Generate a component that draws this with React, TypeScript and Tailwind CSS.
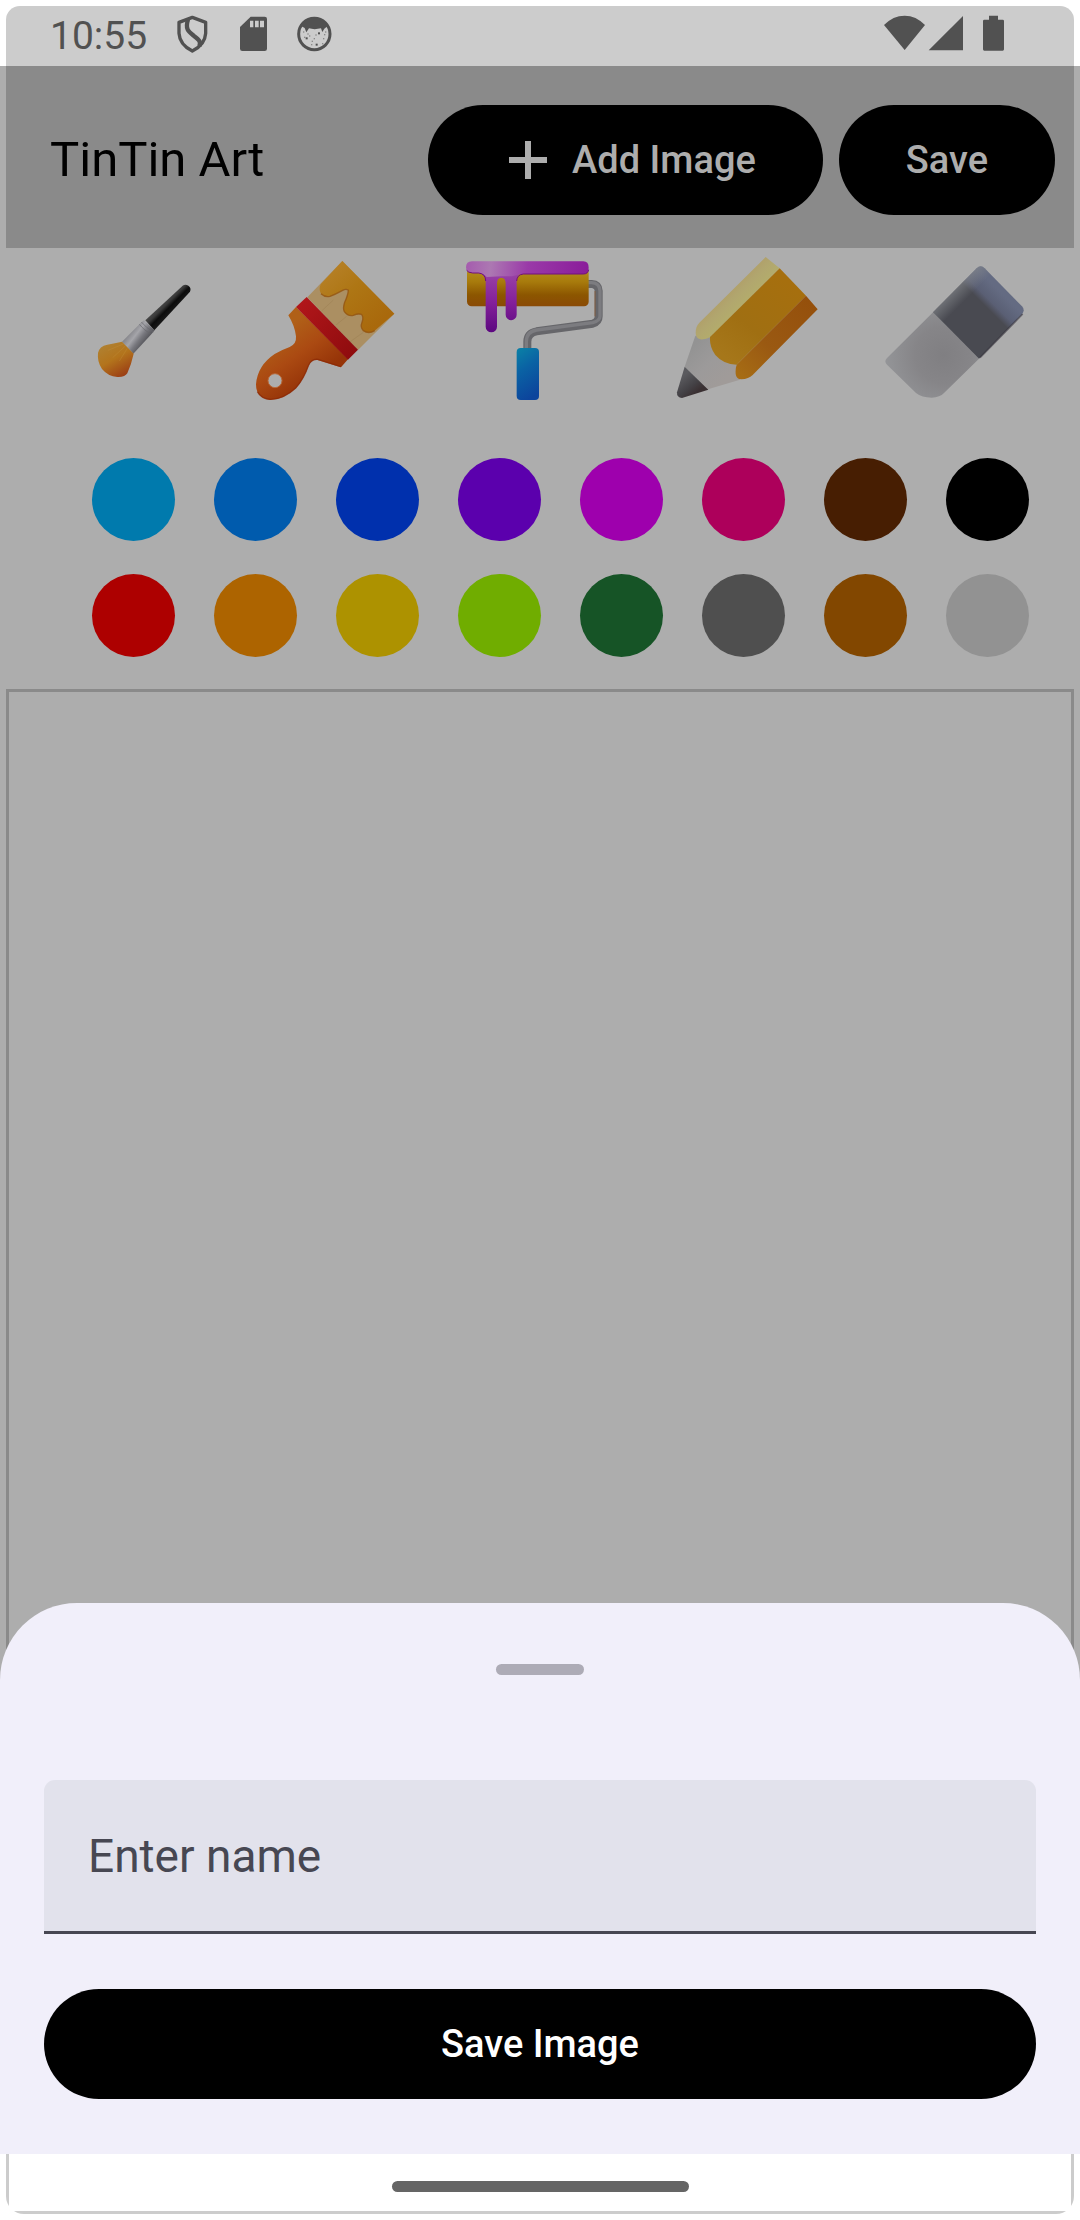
import React, { useState } from "react";

function ShieldIcon() {
  return (
    <svg viewBox="528 40 108 120" className="h-10 w-9" fill="none" stroke="#515151" strokeWidth="10" strokeLinejoin="round" aria-hidden="true">
      <path d="M580 50 L620 65 V98 Q618 132 580 151 Q542 132 540 98 V65 Z" />
      <path d="M567 57 C558 85 568 92 584 105 C602 118 606 124 601 137" strokeWidth="13" />
    </svg>
  );
}

function SdCardIcon() {
  return (
    <svg viewBox="720 40 87 120" className="h-10 w-[29px]" aria-hidden="true">
      <path fill="#515151" d="M755 48 H797 Q804 48 804 55 V144 Q804 151 797 151 H730 Q723 151 723 144 V79 Z" />
      <path fill="#cccccc" d="M753 60 h10 v20 h-10z M768 60 h11 v20 h-11z M783 60 h12 v20 h-12z" />
    </svg>
  );
}

function FaceIcon() {
  const dots = [
    [912, 92], [925, 98], [915, 108], [938, 120], [944, 112], [975, 100],
    [972, 112], [936, 130], [978, 92], [930, 104], [969, 127], [949, 101],
  ];
  return (
    <svg viewBox="891 40 111 120" className="h-10 w-[37px]" aria-hidden="true">
      <circle cx="946" cy="100" r="47" fill="none" stroke="#515151" strokeWidth="9" />
      <path fill="#515151" d="M906 76 Q922 52 946 52 Q970 52 986 76 L976 84 L970 94 L966 83 Q946 88 930 83 L922 95 L917 82 Z" />
      {dots.map(([x, y]) => (
        <rect key={`${x}-${y}`} x={x} y={y} width="4" height="4" fill="#8a8a8a" />
      ))}
      <rect x="920" y="110" width="6" height="6" fill="#515151" />
      <rect x="957" y="95" width="6" height="6" fill="#515151" />
      <rect x="950" y="129" width="6" height="6" fill="#515151" />
    </svg>
  );
}

function SmallBrush() {
  return (
    <svg viewBox="36 33 300 444" className="h-[148px] w-[100px]" aria-hidden="true">
      <defs>
        <linearGradient id="sb-handle" gradientUnits="userSpaceOnUse" x1="240" y1="165" x2="280" y2="205">
          <stop offset="0" stopColor="#8c8c8c" /><stop offset=".18" stopColor="#4a4a4a" />
          <stop offset=".4" stopColor="#3a3a3a" /><stop offset=".62" stopColor="#0c0c0c" /><stop offset="1" stopColor="#1c1c1c" />
        </linearGradient>
        <linearGradient id="sb-metal" gradientUnits="userSpaceOnUse" x1="152" y1="258" x2="196" y2="292">
          <stop offset="0" stopColor="#85858a" /><stop offset=".35" stopColor="#a5a5aa" />
          <stop offset=".65" stopColor="#78787e" /><stop offset="1" stopColor="#55555a" />
        </linearGradient>
        <linearGradient id="sb-hair" gradientUnits="userSpaceOnUse" x1="75" y1="300" x2="130" y2="396">
          <stop offset="0" stopColor="#b08030" /><stop offset=".45" stopColor="#b3741c" /><stop offset="1" stopColor="#9a3c14" />
        </linearGradient>
      </defs>
      <path fill="url(#sb-handle)" d="M196 226 L308 122 Q316 116 325 122 Q335 129 330 140 L223 256 Z" />
      <path fill="url(#sb-metal)" d="M126 290 L182 234 L192 226 L224 256 L214 268 L160 326 Z" />
      <path stroke="#66666b" strokeWidth="2" fill="none" d="M178 238 Q190 254 213 268 M184 231 Q198 248 220 261" />
      <path fill="url(#sb-hair)" d="M126 290 L161 326 Q154 358 142 385 Q135 397 112 396 Q84 394 66 372 Q51 350 54 324 Q58 303 82 299 Q105 295 126 290 Z" />
      <path stroke="#c79a45" strokeWidth="2" opacity=".4" fill="none" d="M130 297 L84 316 M136 303 L98 338 M142 310 L118 348" />
    </svg>
  );
}

function WideBrush() {
  return (
    <svg viewBox="510 33 450 444" className="h-[148px] w-[150px]" aria-hidden="true">
      <defs>
        <linearGradient id="wb-handle" gradientUnits="userSpaceOnUse" x1="600" y1="260" x2="700" y2="400">
          <stop offset="0" stopColor="#b06018" /><stop offset=".5" stopColor="#ab4a12" /><stop offset="1" stopColor="#963408" />
        </linearGradient>
        <linearGradient id="wb-band" gradientUnits="userSpaceOnUse" x1="665" y1="175" x2="820" y2="325">
          <stop offset="0" stopColor="#b0161a" /><stop offset="1" stopColor="#8f0c0e" />
        </linearGradient>
        <linearGradient id="wb-paint" gradientUnits="userSpaceOnUse" x1="750" y1="80" x2="890" y2="240">
          <stop offset="0" stopColor="#b57f24" /><stop offset=".4" stopColor="#ae7614" /><stop offset="1" stopColor="#a9690c" />
        </linearGradient>
      </defs>
      <path fill="#ab8f62" d="M682 157 L787 48 L943 206 L834 315 Z" />
      <path stroke="#9a7d50" strokeWidth="3" opacity=".4" d="M760 165 L725 198 M800 214 L768 240 M850 262 L808 292" />
      <path fill="url(#wb-handle)" fillRule="evenodd" d="M648 186 L804 343 L783 367 Q755 358 712 345 Q694 343 686 362 Q672 402 648 430 Q610 465 570 465 Q528 460 528 418 Q532 362 584 327 Q604 315 629 306 Q650 297 648 274 Q644 242 625 211 Z M585 386 A21 21 0 1 0 585 428 A21 21 0 1 0 585 386 Z" />
      <path fill="none" stroke="#8a2806" strokeWidth="4" opacity=".7" d="M532 440 Q544 462 572 463 Q612 462 648 428 Q672 400 685 362 Q694 341 714 343 L782 365" />
      <circle cx="585" cy="407" r="21" fill="none" stroke="#b86a3c" strokeWidth="3" />
      <path fill="url(#wb-band)" d="M648 186 L680 156 L834 314 L804 344 Z" />
      <path fill="url(#wb-paint)" d="M787 48 L943 206 L884 257 Q866 268 850 257 Q840 247 846 232 Q852 216 844 208 Q834 205 820 211 Q804 215 793 200 Q788 190 794 172 Q804 150 805 136 Q799 130 788 136 Q766 148 750 154 Q736 158 723 146 Q715 134 722 118 Z" />
      <path fill="none" stroke="#935410" strokeWidth="4" opacity=".8" d="M884 257 Q866 268 850 257 Q840 247 846 232 Q852 216 844 208 Q834 205 820 211 Q804 215 793 200 Q788 190 794 172 Q804 150 805 136 Q799 130 788 136 Q766 148 750 154 Q736 158 723 146" />
    </svg>
  );
}

function Roller() {
  return (
    <svg viewBox="54 33 468 444" className="h-[148px] w-[156px]" aria-hidden="true">
      <defs>
        <linearGradient id="ro-body" x1="0" y1="0" x2="0" y2="1">
          <stop offset="0" stopColor="#b39020" /><stop offset=".35" stopColor="#a87b0c" />
          <stop offset=".7" stopColor="#8c5600" /><stop offset="1" stopColor="#8a4a06" />
        </linearGradient>
        <linearGradient id="ro-paint" gradientUnits="userSpaceOnUse" x1="80" y1="50" x2="445" y2="85">
          <stop offset="0" stopColor="#a55cae" /><stop offset=".2" stopColor="#ac78b2" />
          <stop offset=".5" stopColor="#9a3aa8" /><stop offset="1" stopColor="#8a1c9a" />
        </linearGradient>
        <linearGradient id="ro-drip" gradientUnits="userSpaceOnUse" x1="0" y1="80" x2="0" y2="262">
          <stop offset="0" stopColor="#9a44a6" /><stop offset=".5" stopColor="#84209a" /><stop offset="1" stopColor="#5c0880" />
        </linearGradient>
        <linearGradient id="ro-grip" x1=".2" y1="0" x2=".5" y2="1">
          <stop offset="0" stopColor="#0a7ea6" /><stop offset=".4" stopColor="#0a62a4" /><stop offset="1" stopColor="#0c449c" />
        </linearGradient>
      </defs>
      <path fill="none" stroke="#66666a" strokeWidth="24" strokeLinejoin="round" d="M440 117 H455 Q475 118 476 138 V214 Q476 231 458 236 L290 259 Q262 264 262 290 V316" />
      <path fill="none" stroke="#7c7c80" strokeWidth="10" d="M440 113 H455 Q479 114 480 138 V214 Q479 228 458 233 L290 255 Q259 260 259 290 V314" />
      <path stroke="#8a5a36" strokeWidth="3" fill="none" opacity=".8" d="M465 138 V214" />
      <rect x="81" y="70" width="365" height="114" rx="14" fill="url(#ro-body)" />
      <path fill="url(#ro-drip)" d="M120 82 H246 Q230 92 230 108 V209 A16 16 0 0 1 197 209 V116 Q197 98 184 98 Q171 98 171 116 V245 A17 17 0 0 1 137 245 V108 Q137 92 120 84 Z" />
      <path fill="url(#ro-paint)" d="M96 49 H430 Q446 49 446 68 Q446 87 430 87 H244 Q228 91 216 94 H184 L140 96 Q132 86 115 84 H98 Q78 83 78 67 Q78 49 96 49 Z" />
      <path fill="none" stroke="#70107c" strokeWidth="3" d="M446 74 Q444 87 430 87 H250 Q231 89 230 108 M137 108 Q137 86 116 84 H98 Q84 83 80 76" />
      <rect x="230" y="309" width="67" height="156" rx="12" fill="url(#ro-grip)" />
    </svg>
  );
}

function PencilTool() {
  return (
    <svg viewBox="36 33 450 444" className="h-[148px] w-[150px]" aria-hidden="true">
      <defs>
        <linearGradient id="pe-light" gradientUnits="userSpaceOnUse" x1="190" y1="140" x2="240" y2="190">
          <stop offset="0" stopColor="#b09d68" /><stop offset=".5" stopColor="#b1a66e" /><stop offset="1" stopColor="#b3ac6c" />
        </linearGradient>
        <linearGradient id="pe-mid" gradientUnits="userSpaceOnUse" x1="380" y1="110" x2="200" y2="340">
          <stop offset="0" stopColor="#a66f0e" /><stop offset=".6" stopColor="#a06f12" /><stop offset="1" stopColor="#a6771a" />
        </linearGradient>
        <linearGradient id="pe-dark" gradientUnits="userSpaceOnUse" x1="455" y1="175" x2="240" y2="390">
          <stop offset="0" stopColor="#95500c" /><stop offset=".6" stopColor="#9a5912" /><stop offset="1" stopColor="#a66c14" />
        </linearGradient>
        <linearGradient id="pe-wood" gradientUnits="userSpaceOnUse" x1="90" y1="310" x2="190" y2="410">
          <stop offset="0" stopColor="#939393" /><stop offset=".5" stopColor="#9c9a9a" /><stop offset="1" stopColor="#a09b99" />
        </linearGradient>
        <linearGradient id="pe-tip" gradientUnits="userSpaceOnUse" x1="60" y1="400" x2="100" y2="450">
          <stop offset="0" stopColor="#5a5a5e" /><stop offset=".6" stopColor="#444246" /><stop offset="1" stopColor="#3a3032" />
        </linearGradient>
      </defs>
      <path fill="url(#pe-wood)" d="M106 272 L150 270 L236 355 L240 404 L144 433 L74 365 Z" />
      <path fill="url(#pe-tip)" d="M74 365 L145 434 L66 459 Q50 458 51 442 Z" />
      <path fill="url(#pe-light)" d="M317 36 L359 70 L150 277 Q138 284 121 283 Q107 280 107 264 Q107 243 118 233 Z" />
      <path fill="url(#pe-mid)" d="M359 70 L438 152 L230 359 Q190 358 166 330 Q148 305 150 276 Z" />
      <path fill="url(#pe-dark)" d="M438 152 L473 193 L278 390 Q266 402 244 403 Q228 402 227 386 Q226 370 230 359 Z" />
    </svg>
  );
}

function EraserTool() {
  return (
    <svg viewBox="660 33 447 444" className="h-[148px] w-[149px]" aria-hidden="true">
      <defs>
        <linearGradient id="er-sleeve" gradientUnits="userSpaceOnUse" x1="976" y1="184" x2="1020" y2="140">
          <stop offset="0" stopColor="#494a51" /><stop offset=".35" stopColor="#5a5f74" /><stop offset="1" stopColor="#646b82" />
        </linearGradient>
        <linearGradient id="er-edge" gradientUnits="userSpaceOnUse" x1="885" y1="136" x2="915" y2="166">
          <stop offset="0" stopColor="#85888c" stopOpacity=".6" /><stop offset="1" stopColor="#85888c" stopOpacity="0" />
        </linearGradient>
        <radialGradient id="er-light" gradientUnits="userSpaceOnUse" cx="850" cy="330" r="170">
          <stop offset="0" stopColor="#807f82" /><stop offset=".5" stopColor="#868588" /><stop offset="1" stopColor="#939497" />
        </radialGradient>
      </defs>
      <path fill="url(#er-light)" d="M819 202 L957 341 L852 444 Q840 457 815 458 Q785 458 768 444 L681 359 Q671 349 681 339 Z" />
      <path fill="url(#er-sleeve)" d="M819 202 L950 70 Q962 58 974 70 L1086 184 Q1096 195 1086 208 L957 341 Z" />
      <path fill="url(#er-edge)" d="M819 202 L950 70 Q962 58 974 70 L1086 184 Q1096 195 1086 208 L957 341 Z" />
      <path stroke="#33303a" strokeWidth="5" fill="none" opacity=".6" d="M1088 207 L960 338" />
    </svg>
  );
}

const tools = [
  { name: "Fine brush", Icon: SmallBrush },
  { name: "Wide brush", Icon: WideBrush },
  { name: "Roller", Icon: Roller },
  { name: "Pencil", Icon: PencilTool },
  { name: "Eraser", Icon: EraserTool },
];

const swatchRows = [
  [
    { name: "Sky", fill: "bg-[#007aad]" },
    { name: "Azure", fill: "bg-[#005bad]" },
    { name: "Blue", fill: "bg-[#0030ad]" },
    { name: "Violet", fill: "bg-[#5b00ad]" },
    { name: "Magenta", fill: "bg-[#9e00ad]" },
    { name: "Pink", fill: "bg-[#ad005b]" },
    { name: "Brown", fill: "bg-[#471e02]" },
    { name: "Black", fill: "bg-black" },
  ],
  [
    { name: "Red", fill: "bg-[#ad0000]" },
    { name: "Orange", fill: "bg-[#ad6400]" },
    { name: "Yellow", fill: "bg-[#ad9200]" },
    { name: "Lime", fill: "bg-[#70ad00]" },
    { name: "Green", fill: "bg-[#165426]" },
    { name: "Grey", fill: "bg-[#4f4f4f]" },
    { name: "Ochre", fill: "bg-[#824700]" },
    { name: "Silver", fill: "bg-[#929292]" },
  ],
];

function StatusBar() {
  return (
    <div className="mx-1.5 mt-1.5 flex h-[60px] items-center justify-between rounded-t-[14px] bg-[#cccccc] pr-[69px] pl-11 text-[#515151]">
      <div className="flex items-center gap-7">
        <span className="text-[39px] leading-[56px]">10:55</span>
        <div className="flex items-center gap-7 pb-1">
          <ShieldIcon />
          <SdCardIcon />
          <FaceIcon />
        </div>
      </div>
      <div className="flex items-center pb-1">
        <svg viewBox="66 40 129 120" className="h-10 w-[43px]" aria-hidden="true">
          <path fill="#515151" d="M131 148 L69 73 Q96 45 131 45 Q165 45 192 73 Z" />
        </svg>
        <svg viewBox="201 40 108 120" className="ml-0.5 h-10 w-9" aria-hidden="true">
          <path fill="#515151" d="M203 149 L306 46 V149 Z" />
        </svg>
        <svg viewBox="363 40 69 120" className="ml-[18px] h-10 w-[23px]" aria-hidden="true">
          <path fill="#515151" d="M384 45 H411 V57 H425 Q429 57 429 61 V146 Q429 150 425 150 H370 Q366 150 366 146 V61 Q366 57 370 57 H384 Z" />
        </svg>
      </div>
    </div>
  );
}

export default function App() {
  const [name, setName] = useState("");
  return (
    <div className="flex min-h-screen flex-col bg-white font-['Roboto',sans-serif]">
      <StatusBar />

      <div className="relative flex flex-1 flex-col bg-[#adadad] px-1.5">
        <header className="flex items-center justify-between bg-[#8a8a8a] pt-[39px] pr-[19px] pb-[33px] pl-11">
          <h1 className="text-[49px] leading-[56px] text-black">TinTin Art</h1>
          <div className="flex gap-4 text-[38px] font-medium text-[#adadad]">
            <button type="button" className="flex h-[110px] items-center gap-[11px] rounded-full bg-black px-[67px]">
              <svg viewBox="0 0 66 66" className="size-[66px]" fill="none" stroke="#adadad" strokeWidth="6" aria-hidden="true">
                <path d="M33 14 V52 M14 33 H52" />
              </svg>
              Add Image
            </button>
            <button type="button" className="h-[110px] rounded-full bg-black px-[67px]">
              Save
            </button>
          </div>
        </header>

        <section className="flex flex-col gap-[54px] pt-2 pr-[45px] pb-8 pl-[86px]">
          <div className="flex justify-between">
            {tools.map(({ name: label, Icon }) => (
              <button key={label} type="button" aria-label={label}>
                <Icon />
              </button>
            ))}
          </div>
          <div className="flex flex-col gap-[33px]">
            {swatchRows.map((row, i) => (
              <div key={i} className="flex justify-between">
                {row.map((s) => (
                  <button key={s.name} type="button" aria-label={s.name} className={`size-[83px] rounded-full ${s.fill}`} />
                ))}
              </div>
            ))}
          </div>
        </section>

        <main aria-label="Canvas" className="flex-1 border-x-3 border-t-3 border-[#8a8a8a]" />

        <form
          className="absolute inset-x-0 bottom-0 flex flex-col rounded-t-[77px] bg-[#f1effa] px-11 pt-[61px] pb-[55px]"
          onSubmit={(e) => e.preventDefault()}
        >
          <div className="h-[11px] w-[88px] self-center rounded-md bg-[#adabb6]" />
          <input
            type="text"
            aria-label="Enter name"
            placeholder="Enter name"
            value={name}
            onChange={(e) => setName(e.target.value)}
            className="mt-[105px] h-[154px] w-full rounded-t-[11px] border-b-3 border-[#474752] bg-[#e2e2ec] px-11 text-[46px] text-[#474752] outline-none placeholder:text-[#474752] placeholder:opacity-100"
          />
          <button type="submit" className="mt-[55px] h-[110px] w-full rounded-full bg-black text-[38px] font-medium text-white">
            Save Image
          </button>
        </form>
      </div>

      <footer className="px-1.5 pb-1.5">
        <div className="overflow-hidden rounded-b-[18px]">
          <div className="flex h-[60px] items-end justify-center border-x-3 border-b-3 border-[#cccccc] pb-[19px]">
            <div className="h-[11px] w-[297px] rounded-full bg-[#656565]" />
          </div>
        </div>
      </footer>
    </div>
  );
}
